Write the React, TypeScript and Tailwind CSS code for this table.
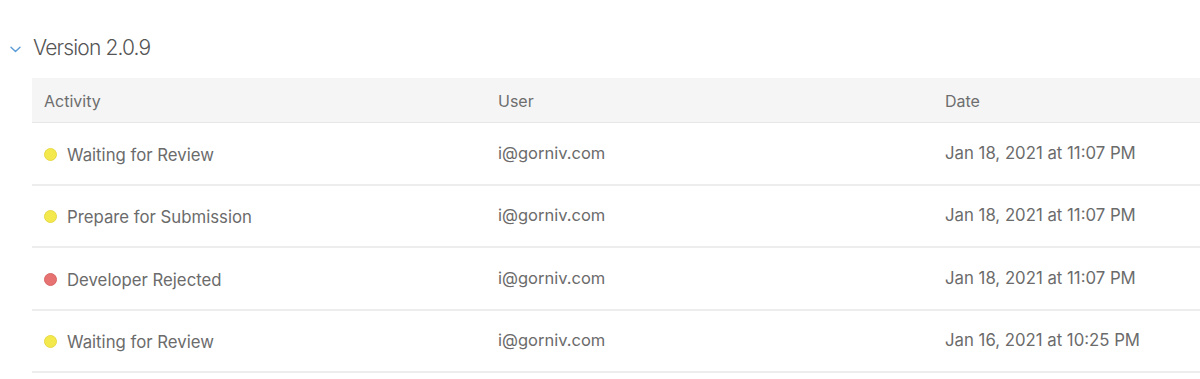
import React from "react";

const rows = [
  { activity: "Waiting for Review", color: "yellow", user: "i@gorniv.com", date: "Jan 18, 2021 at 11:07 PM" },
  { activity: "Prepare for Submission", color: "yellow", user: "i@gorniv.com", date: "Jan 18, 2021 at 11:07 PM" },
  { activity: "Developer Rejected", color: "red", user: "i@gorniv.com", date: "Jan 18, 2021 at 11:07 PM" },
  { activity: "Waiting for Review", color: "yellow", user: "i@gorniv.com", date: "Jan 16, 2021 at 10:25 PM" },
];

export default function App() {
  return (
    <div className="w-[1200px] h-[379px] bg-white overflow-hidden text-[#6b6b6b]" style={{ fontFamily: "Inter, 'Noto Sans', sans-serif" }}>
      <div className="flex items-center h-[36px] mt-[30px] pl-[10px]">
        <svg width="11" height="7" viewBox="0 0 11 7" className="mr-[12px] mt-[2px]">
          <path d="M1 1.2 L5.5 5.5 L10 1.2" fill="none" stroke="#5b9bd5" strokeWidth="1.4" strokeLinecap="round" strokeLinejoin="round" />
        </svg>
        <span className="text-[21px] text-[#555] font-light tracking-[-0.85px]">Version 2.0.9</span>
      </div>
      <div className="ml-[32px] mt-[12px]">
        <div className="grid grid-cols-[454px_447px_1fr] h-[45px] bg-[#f5f5f5] border-b border-[#e6e6e6] items-center text-[16px] text-[#6e6e6e]">
          <div className="pl-[12px] mt-[2px]">Activity</div>
          <div className="pl-[12px] mt-[2px]">User</div>
          <div className="pl-[12px] mt-[2px]">Date</div>
        </div>
        {rows.map((r, i) => (
          <div key={i} className="grid grid-cols-[454px_447px_1fr] h-[62.5px] border-b-2 border-[#ededed] items-center">
            <div className="pl-[12px] flex items-center">
              <span className={`w-[13px] h-[13px] rounded-full mr-[10px] mt-[2px] ${r.color === "yellow" ? "bg-[#f4e94c] border border-[#e6d944]" : "bg-[#e77272] border border-[#d96666]"}`} />
              <span className="mt-[4px] text-[16.75px]">{r.activity}</span>
            </div>
            <div className="pl-[12px] text-[16.5px]">{r.user}</div>
            <div className="pl-[12px] text-[16.75px]">{r.date}</div>
          </div>
        ))}
      </div>
    </div>
  );
}
